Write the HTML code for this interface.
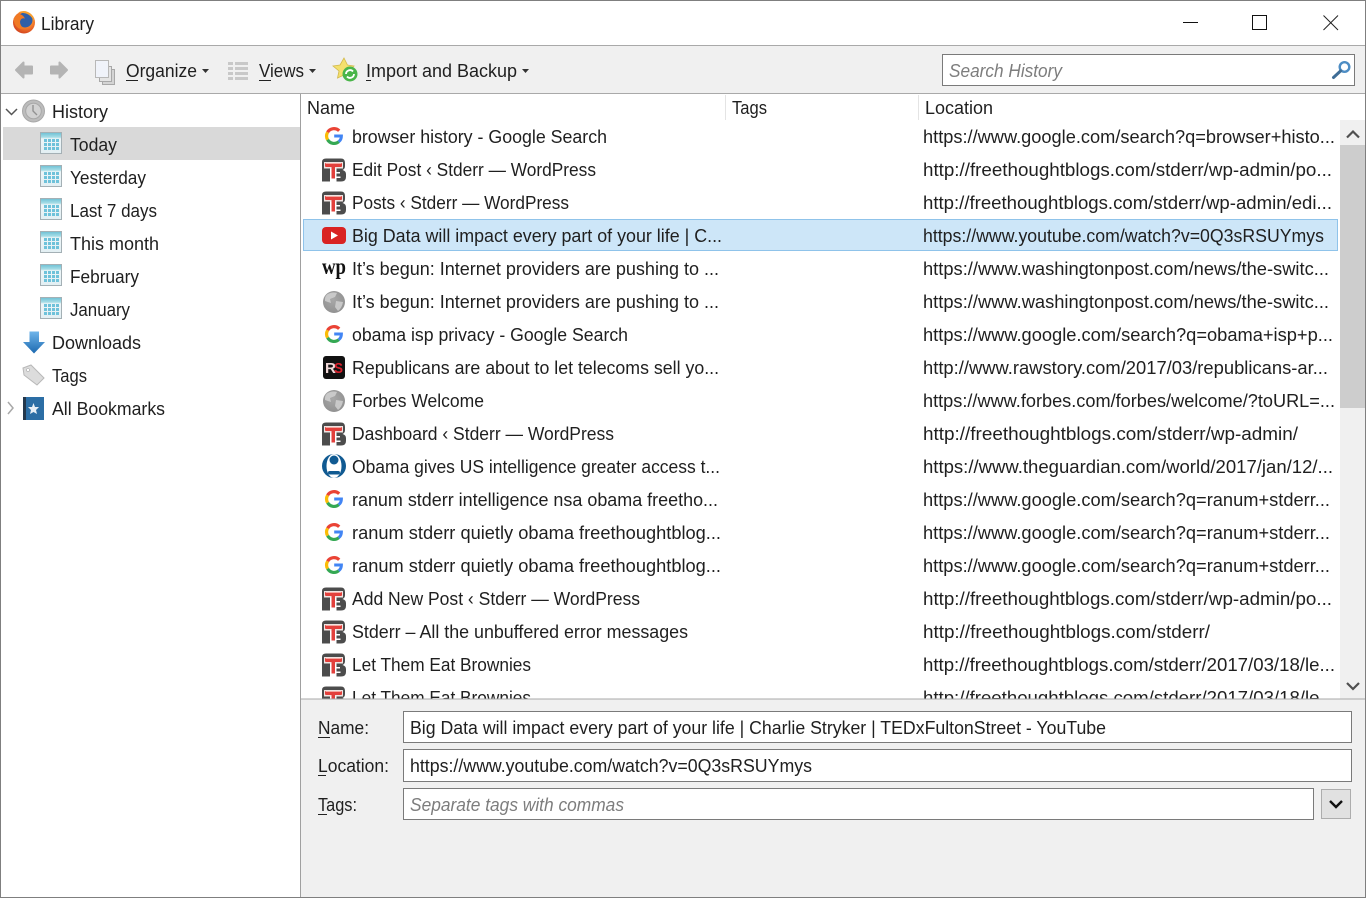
<!DOCTYPE html>
<html><head><meta charset="utf-8"><title>Library</title>
<style>
html,body{margin:0;padding:0;background:#fff;overflow:hidden}
svg{display:block}
text{font-family:"Liberation Sans",sans-serif;font-size:18px;fill:#1f1f1f;white-space:pre}
.i{font-style:italic;fill:#7d7d7d}
</style></head><body>
<svg width="1366" height="898" viewBox="0 0 1366 898" xmlns="http://www.w3.org/2000/svg">
<defs>
<linearGradient id="cal" x1="0" y1="0" x2="0" y2="1"><stop offset="0" stop-color="#6cc0d4"/><stop offset=".22" stop-color="#a6dde6"/><stop offset=".3" stop-color="#eef6f8"/><stop offset="1" stop-color="#e2eff3"/></linearGradient>
<linearGradient id="blue" x1="0" y1="0" x2="0" y2="1"><stop offset="0" stop-color="#6fb5ea"/><stop offset="1" stop-color="#1c69b0"/></linearGradient>
<radialGradient id="glob" cx=".45" cy=".4" r=".7"><stop offset="0" stop-color="#a8a8a8"/><stop offset="1" stop-color="#8e8e8e"/></radialGradient>
<radialGradient id="fox" cx=".6" cy=".35" r=".75"><stop offset="0" stop-color="#ffcb3d"/><stop offset=".55" stop-color="#f2762a"/><stop offset="1" stop-color="#c9361c"/></radialGradient>
<symbol id="c" width="24" height="24" viewBox="0 0 24 24" overflow="visible">
<rect x=".5" y=".5" width="21" height="21" fill="url(#cal)" stroke="#a4b0b5"/>
<g fill="#6fc2da"><rect x="4" y="7" width="3" height="3"/><rect x="8" y="7" width="3" height="3"/><rect x="12" y="7" width="3" height="3"/><rect x="16" y="7" width="3" height="3"/><rect x="4" y="11" width="3" height="3"/><rect x="8" y="11" width="3" height="3"/><rect x="12" y="11" width="3" height="3"/><rect x="16" y="11" width="3" height="3"/><rect x="4" y="15" width="3" height="3"/><rect x="8" y="15" width="3" height="3"/><rect x="12" y="15" width="3" height="3"/><rect x="16" y="15" width="3" height="3"/></g>
</symbol>
<symbol id="g" width="24" height="24" viewBox="0 0 24 24" overflow="visible">
<path d="M17.200 6.800A7.400 7.400 0 0 0 5.600 8.300" fill="none" stroke="#ea4335" stroke-width="3.200"/>
<path d="M5.600 8.300A7.400 7.400 0 0 0 5.600 15.700" fill="none" stroke="#fbbc05" stroke-width="3.200"/>
<path d="M5.600 15.700A7.400 7.400 0 0 0 16.800 17.700" fill="none" stroke="#34a853" stroke-width="3.200"/>
<path d="M16.700 17.700Q19.400 15.700 19.400 12H12.200" fill="none" stroke="#4285f4" stroke-width="3"/>
</symbol>
<symbol id="f" width="24" height="24" viewBox="0 0 24 24" overflow="visible">
<path d="M0 4Q0 .500 4 .500H19Q23 .500 23 5V8Q23 11 20.500 12Q24 13 24 16V19Q24 23.500 19 23.500H14.500V10.500H8V23.500H0Z" fill="#4c4c4c"/>
<path d="M14.500 15.500H18V14H14.500ZM14.500 20H18.500V18.500H14.500Z" fill="#fff"/>
<rect x="2" y="4" width="19" height="6.500" fill="#efe4e2"/>
<rect x="3" y="5" width="17" height="4" rx="1" fill="#e2403c"/>
<rect x="9.500" y="8.500" width="3.500" height="12" fill="#e2403c"/>
<rect x="4" y="5" width="15" height="1" fill="#f5a7a0"/>
</symbol>
<symbol id="w" width="24" height="24" viewBox="0 0 24 24" overflow="visible">
<circle cx="12" cy="12" r="11" fill="url(#glob)"/>
<path d="M5 4.500Q10 1.500 15 3L13 7 8 9 9 13 3 11Q2.500 7 5 4.500ZM14 11L21 12Q20 18 16 21L13 17Z" fill="#d0d0d0" opacity=".85"/>
</symbol>
</defs>

<!-- window -->
<rect x="0" y="0" width="1366" height="898" fill="#fff"/>
<rect x="1" y="46" width="1364" height="47" fill="#f0f0f0"/>
<rect x="1" y="45" width="1364" height="1" fill="#a9a9a9"/>
<rect x="1" y="93" width="1364" height="1" fill="#a9a9a9"/>

<!-- firefox icon -->
<circle cx="24" cy="22.500" r="11" fill="url(#fox)"/>
<circle cx="25" cy="20" r="7.500" fill="#2f5fa8"/>
<path d="M13.500 19Q15 31 27 29Q20 27.500 20 21.500Q21 17.500 25 18.500Q22 13 16.500 14.500Z" fill="#f07a24"/>
<path d="M18 12.500Q25 9 31 14Q34 17 34 21Q31 15 26 13.500Q22 12.500 18 12.500Z" fill="#f9a02c"/>
<text x="41" y="30" textLength="53" lengthAdjust="spacingAndGlyphs">Library</text>

<!-- window controls -->
<rect x="1183" y="22" width="15" height="1" fill="#111"/>
<rect x="1252.500" y="15.500" width="14" height="14" fill="none" stroke="#111" stroke-width="1"/>
<path d="M1323.500 15.500L1338 30M1338 15.500L1323.500 30" stroke="#222" stroke-width="1" fill="none"/>

<!-- toolbar -->
<path d="M16 70L23.500 62.500V66.500H32V73.500H23.500V77.500Z" fill="#b4b4b4" stroke="#b4b4b4" stroke-width="2" stroke-linejoin="round"/>
<path d="M67 70L59.500 62.500V66.500H51V73.500H59.500V77.500Z" fill="#b4b4b4" stroke="#b4b4b4" stroke-width="2" stroke-linejoin="round"/>
<g stroke="#a8a8a8" fill="#f2f4f8">
<rect x="102.500" y="69.500" width="12" height="15" fill="#d4d4d4"/>
<rect x="99.500" y="66.500" width="12" height="15" fill="#e4e4e4"/>
<rect x="95.500" y="60.500" width="13" height="17" fill="#f0f3fa" stroke="#b8b8b8"/>
</g>
<text x="126" y="77" textLength="71" lengthAdjust="spacingAndGlyphs">Organize</text>
<rect x="126" y="80" width="12" height="1" fill="#222"/>
<path d="M202 69H209L205.500 73Z" fill="#333"/>
<g fill="#c8c8c8">
<rect x="228" y="62" width="5" height="3"/><rect x="235" y="62" width="13" height="3"/>
<rect x="228" y="67" width="5" height="3"/><rect x="235" y="67" width="13" height="3"/>
<rect x="228" y="72" width="5" height="3"/><rect x="235" y="72" width="13" height="3"/>
<rect x="228" y="77" width="5" height="3"/><rect x="235" y="77" width="13" height="3"/>
</g>
<text x="259" y="77" textLength="45" lengthAdjust="spacingAndGlyphs">Views</text>
<rect x="259" y="80" width="12" height="1" fill="#222"/>
<path d="M309 69H316L312.500 73Z" fill="#333"/>
<path d="M344 58L347.500 65 354 66 349 71 350 78 344 75 337.500 78 339 71 333 66 340 65Z" fill="#f3e06e" stroke="#d3b94a" stroke-width=".8"/>
<circle cx="350" cy="74" r="7.500" fill="#4ab54a"/>
<path d="M346 74A4 4 0 0 1 353 71.500M354 74A4 4 0 0 1 347 76.500" stroke="#fff" stroke-width="1.800" fill="none"/>
<text x="366" y="77" textLength="151" lengthAdjust="spacingAndGlyphs">Import and Backup</text>
<rect x="366" y="80" width="5" height="1" fill="#222"/>
<path d="M522 69H529L525.500 73Z" fill="#333"/>

<!-- search -->
<rect x="942.500" y="54.500" width="412" height="31" fill="#fff" stroke="#7a7a7a"/>
<text x="949" y="77" class="i" textLength="113" lengthAdjust="spacingAndGlyphs">Search History</text>
<circle cx="1344.500" cy="67" r="4.800" fill="#fff" stroke="#4d8dc4" stroke-width="2.400"/>
<path d="M1340.500 71L1333.500 77.500" stroke="#3f6d96" stroke-width="3" stroke-linecap="round"/>

<!-- tree -->
<rect x="300" y="94" width="1" height="803" fill="#a0a0a0"/>
<rect x="3" y="127" width="297" height="33" fill="#d9d9d9"/>
<path d="M6 109L11.500 114.500 17 109" fill="none" stroke="#555" stroke-width="1.500"/>
<circle cx="33.500" cy="111" r="11" fill="#bcbcbc" stroke="#a8a8a8"/>
<circle cx="33.500" cy="111" r="7.800" fill="#d2d2d2" stroke="#a8a8a8"/>
<path d="M33 105V111L37 115" fill="none" stroke="#929292" stroke-width="1.400"/>
<text x="52" y="118" textLength="56" lengthAdjust="spacingAndGlyphs">History</text>
<use href="#c" x="40" y="132"/><text x="70" y="151" textLength="47" lengthAdjust="spacingAndGlyphs">Today</text>
<use href="#c" x="40" y="165"/><text x="70" y="184" textLength="76" lengthAdjust="spacingAndGlyphs">Yesterday</text>
<use href="#c" x="40" y="198"/><text x="70" y="217" textLength="87" lengthAdjust="spacingAndGlyphs">Last 7 days</text>
<use href="#c" x="40" y="231"/><text x="70" y="250" textLength="89" lengthAdjust="spacingAndGlyphs">This month</text>
<use href="#c" x="40" y="264"/><text x="70" y="283" textLength="69" lengthAdjust="spacingAndGlyphs">February</text>
<use href="#c" x="40" y="297"/><text x="70" y="316" textLength="60" lengthAdjust="spacingAndGlyphs">January</text>
<path d="M29.500 331.500H39V342H45L34 353.500 23 342H29.500Z" fill="url(#blue)"/>
<text x="52" y="349" textLength="89" lengthAdjust="spacingAndGlyphs">Downloads</text>
<path d="M23 368L31 365 44 378 37 385 24 375Z" fill="#dcdcdc" stroke="#b8b8b8"/>
<circle cx="28" cy="370" r="1.500" fill="#fff" stroke="#aaa" stroke-width=".6"/>
<text x="52" y="382" textLength="35" lengthAdjust="spacingAndGlyphs">Tags</text>
<path d="M8 402L13 408 8 414" fill="none" stroke="#a8a8a8" stroke-width="1.500"/>
<rect x="23" y="397" width="21" height="23" fill="#2c6ea5"/>
<rect x="23" y="397" width="3" height="23" fill="#24384c"/>
<path d="M33.500 403L35 407H39L36 410 37 414 33.500 412 30 414 31 410 28 407H32Z" fill="#e8eff6"/>
<text x="52" y="415" textLength="113" lengthAdjust="spacingAndGlyphs">All Bookmarks</text>

<!-- column headers -->
<text x="307" y="114" textLength="48" lengthAdjust="spacingAndGlyphs">Name</text>
<text x="732" y="114" textLength="35" lengthAdjust="spacingAndGlyphs">Tags</text>
<text x="925" y="114" textLength="68" lengthAdjust="spacingAndGlyphs">Location</text>
<rect x="725" y="95" width="1" height="25" fill="#e4e4e4"/>
<rect x="918" y="95" width="1" height="25" fill="#e4e4e4"/>

<!-- selected row -->
<rect x="303.500" y="219.500" width="1034" height="31" fill="#cde6f8" stroke="#8fc3ea"/>

<!-- rows -->
<use href="#g" x="322" y="124"/><text x="352" y="143" textLength="255" lengthAdjust="spacingAndGlyphs">browser history - Google Search</text><text x="923" y="143" textLength="412" lengthAdjust="spacingAndGlyphs">https://www.google.com/search?q=browser+histo...</text>
<use href="#f" x="322" y="158"/><text x="352" y="176" textLength="244" lengthAdjust="spacingAndGlyphs">Edit Post ‹ Stderr — WordPress</text><text x="923" y="176" textLength="409" lengthAdjust="spacingAndGlyphs">http://freethoughtblogs.com/stderr/wp-admin/po...</text>
<use href="#f" x="322" y="191"/><text x="352" y="209" textLength="217" lengthAdjust="spacingAndGlyphs">Posts ‹ Stderr — WordPress</text><text x="923" y="209" textLength="409" lengthAdjust="spacingAndGlyphs">http://freethoughtblogs.com/stderr/wp-admin/edi...</text>
<rect x="322" y="227" width="24" height="17" rx="4" fill="#d92323"/><path d="M331 231.500L338 235.500 331 239.500Z" fill="#fff"/><text x="352" y="242" textLength="370" lengthAdjust="spacingAndGlyphs">Big Data will impact every part of your life | C...</text><text x="923" y="242" textLength="401" lengthAdjust="spacingAndGlyphs">https://www.youtube.com/watch?v=0Q3sRSUYmys</text>
<text x="322" y="274" style="font-family:'Liberation Serif',serif;font-weight:bold;font-size:23px;fill:#111" textLength="24" lengthAdjust="spacingAndGlyphs">wp</text><text x="352" y="275" textLength="367" lengthAdjust="spacingAndGlyphs">It’s begun: Internet providers are pushing to ...</text><text x="923" y="275" textLength="406" lengthAdjust="spacingAndGlyphs">https://www.washingtonpost.com/news/the-switc...</text>
<use href="#w" x="322" y="290"/><text x="352" y="308" textLength="367" lengthAdjust="spacingAndGlyphs">It’s begun: Internet providers are pushing to ...</text><text x="923" y="308" textLength="406" lengthAdjust="spacingAndGlyphs">https://www.washingtonpost.com/news/the-switc...</text>
<use href="#g" x="322" y="322"/><text x="352" y="341" textLength="276" lengthAdjust="spacingAndGlyphs">obama isp privacy - Google Search</text><text x="923" y="341" textLength="410" lengthAdjust="spacingAndGlyphs">https://www.google.com/search?q=obama+isp+p...</text>
<rect x="323" y="356" width="22" height="23" rx="3" fill="#111"/><text x="325" y="373" style="font-weight:bold;font-size:15px;fill:#f0d8d8" textLength="11" lengthAdjust="spacingAndGlyphs">R</text><text x="334" y="373" style="font-weight:bold;font-size:15px;fill:#d8202c" textLength="9" lengthAdjust="spacingAndGlyphs">S</text><text x="352" y="374" textLength="367" lengthAdjust="spacingAndGlyphs">Republicans are about to let telecoms sell yo...</text><text x="923" y="374" textLength="405" lengthAdjust="spacingAndGlyphs">http://www.rawstory.com/2017/03/republicans-ar...</text>
<use href="#w" x="322" y="389"/><text x="352" y="407" textLength="132" lengthAdjust="spacingAndGlyphs">Forbes Welcome</text><text x="923" y="407" textLength="412" lengthAdjust="spacingAndGlyphs">https://www.forbes.com/forbes/welcome/?toURL=...</text>
<use href="#f" x="322" y="422"/><text x="352" y="440" textLength="262" lengthAdjust="spacingAndGlyphs">Dashboard ‹ Stderr — WordPress</text><text x="923" y="440" textLength="375" lengthAdjust="spacingAndGlyphs">http://freethoughtblogs.com/stderr/wp-admin/</text>
<circle cx="334" cy="466" r="12" fill="#105a92"/><ellipse cx="334" cy="466" rx="7.500" ry="12" fill="#fff"/><circle cx="334" cy="460" r="4.500" fill="#105a92"/><rect x="328" y="471" width="12" height="3.500" rx="1.700" fill="#105a92"/><text x="352" y="473" textLength="368" lengthAdjust="spacingAndGlyphs">Obama gives US intelligence greater access t...</text><text x="923" y="473" textLength="410" lengthAdjust="spacingAndGlyphs">https://www.theguardian.com/world/2017/jan/12/...</text>
<use href="#g" x="322" y="487"/><text x="352" y="506" textLength="366" lengthAdjust="spacingAndGlyphs">ranum stderr intelligence nsa obama freetho...</text><text x="923" y="506" textLength="407" lengthAdjust="spacingAndGlyphs">https://www.google.com/search?q=ranum+stderr...</text>
<use href="#g" x="322" y="520"/><text x="352" y="539" textLength="369" lengthAdjust="spacingAndGlyphs">ranum stderr quietly obama freethoughtblog...</text><text x="923" y="539" textLength="407" lengthAdjust="spacingAndGlyphs">https://www.google.com/search?q=ranum+stderr...</text>
<use href="#g" x="322" y="553"/><text x="352" y="572" textLength="369" lengthAdjust="spacingAndGlyphs">ranum stderr quietly obama freethoughtblog...</text><text x="923" y="572" textLength="407" lengthAdjust="spacingAndGlyphs">https://www.google.com/search?q=ranum+stderr...</text>
<use href="#f" x="322" y="587"/><text x="352" y="605" textLength="288" lengthAdjust="spacingAndGlyphs">Add New Post ‹ Stderr — WordPress</text><text x="923" y="605" textLength="409" lengthAdjust="spacingAndGlyphs">http://freethoughtblogs.com/stderr/wp-admin/po...</text>
<use href="#f" x="322" y="620"/><text x="352" y="638" textLength="336" lengthAdjust="spacingAndGlyphs">Stderr – All the unbuffered error messages</text><text x="923" y="638" textLength="287" lengthAdjust="spacingAndGlyphs">http://freethoughtblogs.com/stderr/</text>
<use href="#f" x="322" y="653"/><text x="352" y="671" textLength="179" lengthAdjust="spacingAndGlyphs">Let Them Eat Brownies</text><text x="923" y="671" textLength="412" lengthAdjust="spacingAndGlyphs">http://freethoughtblogs.com/stderr/2017/03/18/le...</text>
<use href="#f" x="322" y="686"/><text x="352" y="704" textLength="179" lengthAdjust="spacingAndGlyphs">Let Them Eat Brownies</text><text x="923" y="704" textLength="412" lengthAdjust="spacingAndGlyphs">http://freethoughtblogs.com/stderr/2017/03/18/le...</text>

<!-- scrollbar -->
<rect x="1340" y="120" width="25" height="579" fill="#f0f0f0"/>
<rect x="1340" y="145" width="25" height="263" fill="#cdcdcd"/>
<path d="M1347 137.500L1353 131.500 1359 137.500" fill="none" stroke="#505050" stroke-width="2.200"/>
<path d="M1347 683L1353 689 1359 683" fill="none" stroke="#505050" stroke-width="2.200"/>

<!-- details pane -->
<rect x="301" y="699" width="1064" height="198" fill="#f0f0f0"/>
<rect x="301" y="698.500" width="1064" height="1" fill="#a9a9a9"/>
<text x="318" y="734" textLength="51" lengthAdjust="spacingAndGlyphs">Name:</text><rect x="318" y="737" width="12" height="1" fill="#222"/>
<rect x="403.500" y="711.500" width="948" height="31" fill="#fff" stroke="#7a7a7a"/>
<text x="410" y="734" textLength="696" lengthAdjust="spacingAndGlyphs">Big Data will impact every part of your life | Charlie Stryker | TEDxFultonStreet - YouTube</text>
<text x="318" y="772" textLength="71" lengthAdjust="spacingAndGlyphs">Location:</text><rect x="318" y="775" width="8" height="1" fill="#222"/>
<rect x="403.500" y="749.500" width="948" height="32" fill="#fff" stroke="#7a7a7a"/>
<text x="410" y="772" textLength="402" lengthAdjust="spacingAndGlyphs">https://www.youtube.com/watch?v=0Q3sRSUYmys</text>
<text x="318" y="811" textLength="39" lengthAdjust="spacingAndGlyphs">Tags:</text><rect x="318" y="814" width="9" height="1" fill="#222"/>
<rect x="403.500" y="788.500" width="910" height="31" fill="#fff" stroke="#7a7a7a"/>
<text x="410" y="811" class="i" textLength="214" lengthAdjust="spacingAndGlyphs">Separate tags with commas</text>
<rect x="1321.500" y="789.500" width="29" height="29" fill="#e1e1e1" stroke="#adadad"/>
<path d="M1330 801L1336 807 1342 801" fill="none" stroke="#111" stroke-width="2.400"/>

<!-- window border -->
<rect x="0" y="0" width="1366" height="1" fill="#7f7f7f"/>
<rect x="0" y="0" width="1" height="898" fill="#7f7f7f"/>
<rect x="1365" y="0" width="1" height="898" fill="#7f7f7f"/>
<rect x="0" y="897" width="1366" height="1" fill="#7f7f7f"/>
</svg>
</body></html>
